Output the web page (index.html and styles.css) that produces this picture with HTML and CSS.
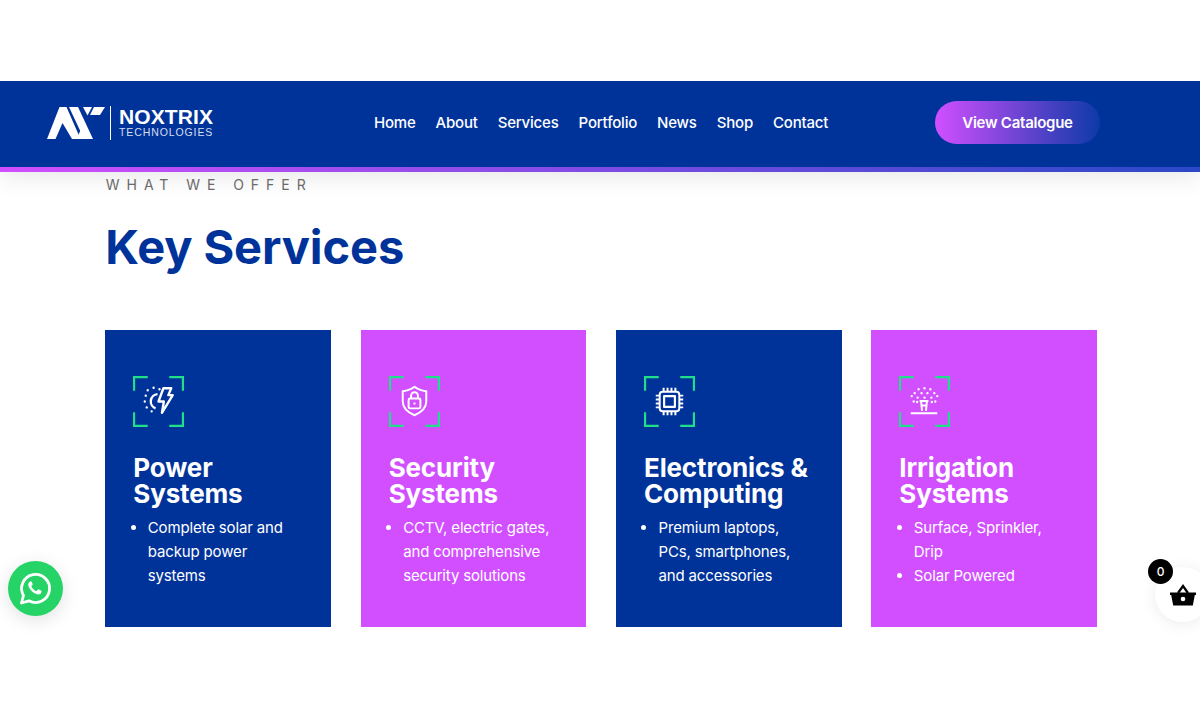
FILE: index.html
```html
<!DOCTYPE html>
<html lang="en">
<head>
  <meta charset="UTF-8">
  <title>Noxtrix Technologies</title>
  <link rel="stylesheet" href="styles.css">
</head>
<body>
  <header class="site-header">
    <a class="logo" href="#">
      <svg class="logo-mark" width="60" height="33" viewBox="0 0 60 33" fill="#fff">
        <path d="M0 33 L12.500 1 H19.500 L33.500 33 H25 L15.500 17 L8.500 33 Z"/>
        <path d="M22 1 H31 L46 33 H37 Z"/>
        <path d="M29.500 33 L35.500 20 L40 28 L38 33 Z"/>
        <path d="M36 1 H45 L40.500 9.500 Z"/>
        <path d="M47 1 H58 L53 9 H43 Z"/>
      </svg>
      <span class="logo-text">
        <span class="logo-name">NOXTRIX</span>
        <span class="logo-sub">TECHNOLOGIES</span>
      </span>
    </a>
    <nav class="main-nav">
      <a href="#">Home</a>
      <a href="#">About</a>
      <a href="#">Services</a>
      <a href="#">Portfolio</a>
      <a href="#">News</a>
      <a href="#">Shop</a>
      <a href="#">Contact</a>
    </nav>
    <a class="catalogue-btn" href="#">View Catalogue</a>
  </header>

  <main class="services">
    <p class="eyebrow">WHAT WE OFFER</p>
    <h1>Key Services</h1>
    <div class="card-grid">
      <article class="card card-blue">
        <div class="card-icon">
          <svg width="51" height="51" viewBox="0 0 52 52" fill="none">
            <path class="frame" d="M1 15V1H15M37 1H51V15M51 37V51H37M15 51H1V37"/>
            <g class="glyph">
              <path d="M25 18.500a7.500 7.500 0 0 0-2 14.500" stroke-width="2.400"/>
              <path class="dots" d="M21 12v.01M15 14.500v.01M27 13.500v.01M13 20v.01M12 26v.01M14 32v.01M19 36v.01"/>
              <path d="M31 12.500h8l-3 7h4.500L29.500 37.500l2-11.500h-5.500z" stroke-width="2.400"/>
            </g>
          </svg>
        </div>
        <h2>Power Systems</h2>
        <ul>
          <li>Complete solar and backup power systems</li>
        </ul>
      </article>
      <article class="card card-purple">
        <div class="card-icon">
          <svg width="51" height="51" viewBox="0 0 52 52" fill="none">
            <path class="frame" d="M1 15V1H15M37 1H51V15M51 37V51H37M15 51H1V37"/>
            <g class="glyph">
              <path d="M26 11c3 2.500 7 4 12 4.500V26c0 6.500-5 11-12 14-7-3-12-7.500-12-14V15.500c5-.5 9-2 12-4.500z"/>
              <rect x="20" y="23" width="12" height="10" rx="1.500"/>
              <path d="M22.500 23v-3a3.500 3.500 0 0 1 7 0v3M26 27v2"/>
            </g>
          </svg>
        </div>
        <h2>Security Systems</h2>
        <ul>
          <li>CCTV, electric gates, and comprehensive security solutions</li>
        </ul>
      </article>
      <article class="card card-blue">
        <div class="card-icon">
          <svg width="51" height="51" viewBox="0 0 52 52" fill="none">
            <path class="frame" d="M1 15V1H15M37 1H51V15M51 37V51H37M15 51H1V37"/>
            <g class="glyph">
              <rect x="16" y="16" width="20" height="20" rx="3"/>
              <rect x="20.500" y="20.500" width="11" height="11" stroke-width="2.200"/>
              <path d="M20 12v4M24 12v4M28 12v4M32 12v4M20 36v4M24 36v4M28 36v4M32 36v4M12 20h4M12 24h4M12 28h4M12 32h4M36 20h4M36 24h4M36 28h4M36 32h4"/>
            </g>
          </svg>
        </div>
        <h2>Electronics &amp; Computing</h2>
        <ul>
          <li>Premium laptops, PCs, smartphones, and accessories</li>
        </ul>
      </article>
      <article class="card card-purple">
        <div class="card-icon">
          <svg width="51" height="51" viewBox="0 0 52 52" fill="none">
            <path class="frame" d="M1 15V1H15M37 1H51V15M51 37V51H37M15 51H1V37"/>
            <g class="glyph">
              <path d="M12 38h27M21 25.500h9M22.500 25.500l1 10M28.500 25.500l-1 10M23 30h5"/>
              <path class="dots" d="M26 12.500v.01M20 13.500v.01M32 13.500v.01M16 17.500v.01M23 17.500v.01M29 17.500v.01M36 17.500v.01M13 20.500v.01M19 22v.01M26 22v.01M33 22v.01M39 20.500v.01M15 26v.01M18.500 26.500v.01M33.500 26.500v.01M37 26v.01"/>
            </g>
          </svg>
        </div>
        <h2>Irrigation Systems</h2>
        <ul>
          <li>Surface, Sprinkler, Drip</li>
          <li>Solar Powered</li>
        </ul>
      </article>
    </div>
  </main>

  <a class="whatsapp" href="#">
    <svg width="36" height="36" viewBox="0 0 36 36" fill="none">
      <path d="M3.500 32l2-7.500A14 14 0 1 1 11 29.800z" stroke="#fff" stroke-width="2.800" stroke-linejoin="round"/>
      <path d="M12.600 10.500c-.5 0-1.300.4-1.800 1.200-1 1.500-.6 3.800 1.200 6.300 2 2.800 4.600 4.700 7 5.300 1.800.4 3.400-.2 4.100-1.400.4-.7.500-1.600.4-1.900-.5-.5-2.600-1.600-3.200-1.700-.5 0-1.200 1.300-1.700 1.600-.7.200-2.200-.7-3.500-2-1-1.100-1.800-2.200-1.700-2.800.2-.6 1.200-1.100 1.300-1.700 0-.6-.9-2.500-1.300-3-.2-.2-.5-.2-.8-.2z" fill="#fff"/>
    </svg>
  </a>

  <a class="cart" href="#">
    <svg width="26" height="22" viewBox="0 0 26 22">
      <path d="M8 9l5-7 5 7" fill="none" stroke="#000" stroke-width="2.200"/>
      <path d="M0 8.500h26v2.500h-1.200l-2 10.500H3.200L1.200 11H0z" fill="#000"/>
      <circle cx="13" cy="15" r="2.300" fill="#fff"/>
    </svg>
    <span class="cart-count">0</span>
  </a>
</body>
</html>
```

FILE: styles.css
```css
* {
  box-sizing: border-box;
}
body {
  margin: 0;
  padding-top: 81px;
  min-height: 720px;
  background: #fff;
  font-family: 'Inter', sans-serif;
  color: #fff;
  overflow: hidden;
}
a {
  color: inherit;
  text-decoration: none;
}

/* header */
.site-header {
  position: relative;
  z-index: 2;
  height: 91px;
  display: flex;
  align-items: center;
  padding: 0 100px 8px 47px;
  background: #00339a;
  box-shadow: 0 4px 24px rgba(0, 0, 0, 0.1);
  clip-path: inset(0 0 -40px 0);
}
.site-header::after {
  content: '';
  position: absolute;
  left: 0;
  right: 0;
  bottom: 0;
  height: 5px;
  background: linear-gradient(90deg, #d14fff 0%, #2a48c8 100%);
}
.logo {
  display: flex;
  align-items: center;
  width: 327px;
}
.logo-mark {
  display: block;
}
.logo-text {
  display: flex;
  flex-direction: column;
  margin-left: 3px;
  padding-left: 8px;
  border-left: 1px solid #fff;
  height: 34px;
  justify-content: center;
}
.logo-name {
  font-family: 'Liberation Sans', sans-serif;
  font-size: 21px;
  font-weight: 700;
  line-height: 20px;
  letter-spacing: 0.1px;
}
.logo-sub {
  font-family: 'Liberation Sans', sans-serif;
  font-size: 10.500px;
  line-height: 11px;
  letter-spacing: 0.900px;
  color: #d6def0;
}
.main-nav {
  display: flex;
  gap: 20px;
  font-size: 15px;
  font-weight: 500;
  letter-spacing: -0.200px;
}
.catalogue-btn {
  margin-left: auto;
  width: 165px;
  height: 43px;
  display: flex;
  align-items: center;
  justify-content: center;
  border-radius: 22px;
  background: linear-gradient(90deg, #d14fff 0%, #0d3aa8 100%);
  font-size: 15px;
  font-weight: 600;
  letter-spacing: -0.250px;
}

/* services */
.services {
  padding: 0 103px 0 105.300px;
}
.eyebrow {
  margin: 5px 0 0;
  padding-left: 0.500px;
  font-size: 14px;
  line-height: 16px;
  font-weight: 400;
  letter-spacing: 6.950px;
  color: #6d6d6d;
}
h1 {
  margin: 25px 0 0;
  font-size: 47px;
  line-height: 57px;
  font-weight: 700;
  letter-spacing: -0.100px;
  color: #00339a;
}
.card-grid {
  display: grid;
  grid-template-columns: repeat(4, 1fr);
  gap: 29.700px;
  margin-top: 55px;
}
.card {
  height: 297px;
  padding: 45px 28px 0;
}
.card-blue {
  background: #00339a;
}
.card-purple {
  background: #d14fff;
}
.card-icon svg {
  display: block;
  margin-top: 1px;
}
.frame {
  stroke: #1fe088;
  stroke-width: 2.400;
}
.glyph {
  stroke: #fff;
  stroke-width: 2;
  stroke-linejoin: round;
}
.dots {
  stroke-width: 2.400;
  stroke-linecap: round;
}
.card h2 {
  margin: 28px 0 0;
  font-size: 26px;
  line-height: 26px;
  font-weight: 700;
  letter-spacing: -0.150px;
}
.card ul {
  margin: 9px 0 0;
  padding-left: 14.500px;
  font-size: 15px;
  line-height: 24px;
  letter-spacing: -0.150px;
}

/* floating buttons */
.whatsapp {
  position: fixed;
  left: 8px;
  top: 561px;
  width: 55px;
  height: 55px;
  display: flex;
  align-items: center;
  justify-content: center;
  border-radius: 50%;
  background: #25d366;
  box-shadow: 0 4px 18px rgba(0, 0, 0, 0.12);
}
.cart {
  position: fixed;
  left: 1155px;
  top: 567px;
  width: 55px;
  height: 55px;
  display: flex;
  align-items: center;
  padding-left: 15px;
  border-radius: 50%;
  background: #fff;
  box-shadow: 0 2px 16px rgba(0, 0, 0, 0.08);
}
.cart-count {
  position: absolute;
  left: -7px;
  top: -8px;
  width: 25px;
  height: 25px;
  border-radius: 50%;
  background: #000;
  color: #fff;
  font-size: 12px;
  font-weight: 500;
  line-height: 25px;
  text-align: center;
}
```
